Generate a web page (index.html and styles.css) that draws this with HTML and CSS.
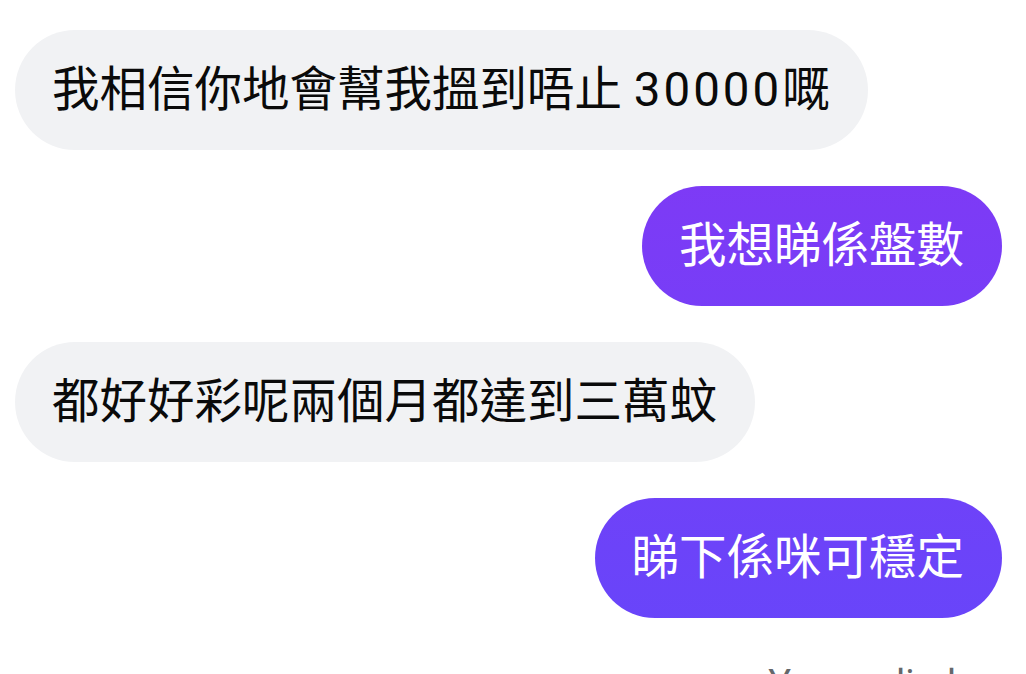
FILE: index.html
```html
<!DOCTYPE html>
<html lang="zh-HK">
<head>
<meta charset="utf-8">
<title>Chat</title>
<link rel="stylesheet" href="styles.css">
</head>
<body>
<main class="thread">
  <div class="msg in">我相信你地會幫我搵到唔止 <span class="num">30000</span>嘅</div>
  <div class="msg out">我想睇係盤數</div>
  <div class="msg in">都好好彩呢兩個月都達到三萬蚊</div>
  <div class="msg out">睇下係咪可穩定</div>
  <div class="label">You replied</div>
</main>
</body>
</html>
```
FILE: styles.css
```css
html, body {
  margin: 0;
  padding: 0;
  background: #ffffff;
  overflow: hidden;
  height: 674px;
}

.thread {
  display: flex;
  flex-direction: column;
  gap: 36px;
  padding-top: 30px;
  font-family: Roboto, "Noto Sans CJK TC", "Noto Sans CJK SC", sans-serif;
}

.msg {
  height: 120px;
  line-height: 120px;
  padding: 0 38px 0 37px;
  border-radius: 60px;
  font-size: 47.5px;
  white-space: nowrap;
  box-sizing: border-box;
}

.in {
  align-self: flex-start;
  margin-left: 15px;
  background: #f1f2f4;
  color: #0a0a0a;
}

.out {
  align-self: flex-end;
  margin-right: 24px;
  color: #ffffff;
  background: linear-gradient(to bottom, rgb(134, 54, 244), rgb(102, 70, 250));
  background-attachment: fixed;
}

.num {
  letter-spacing: 3px;
}

.label {
  align-self: flex-end;
  margin-right: 70px;
  margin-top: 11px;
  font-size: 38px;
  color: #65676b;
  line-height: 1;
}
```
